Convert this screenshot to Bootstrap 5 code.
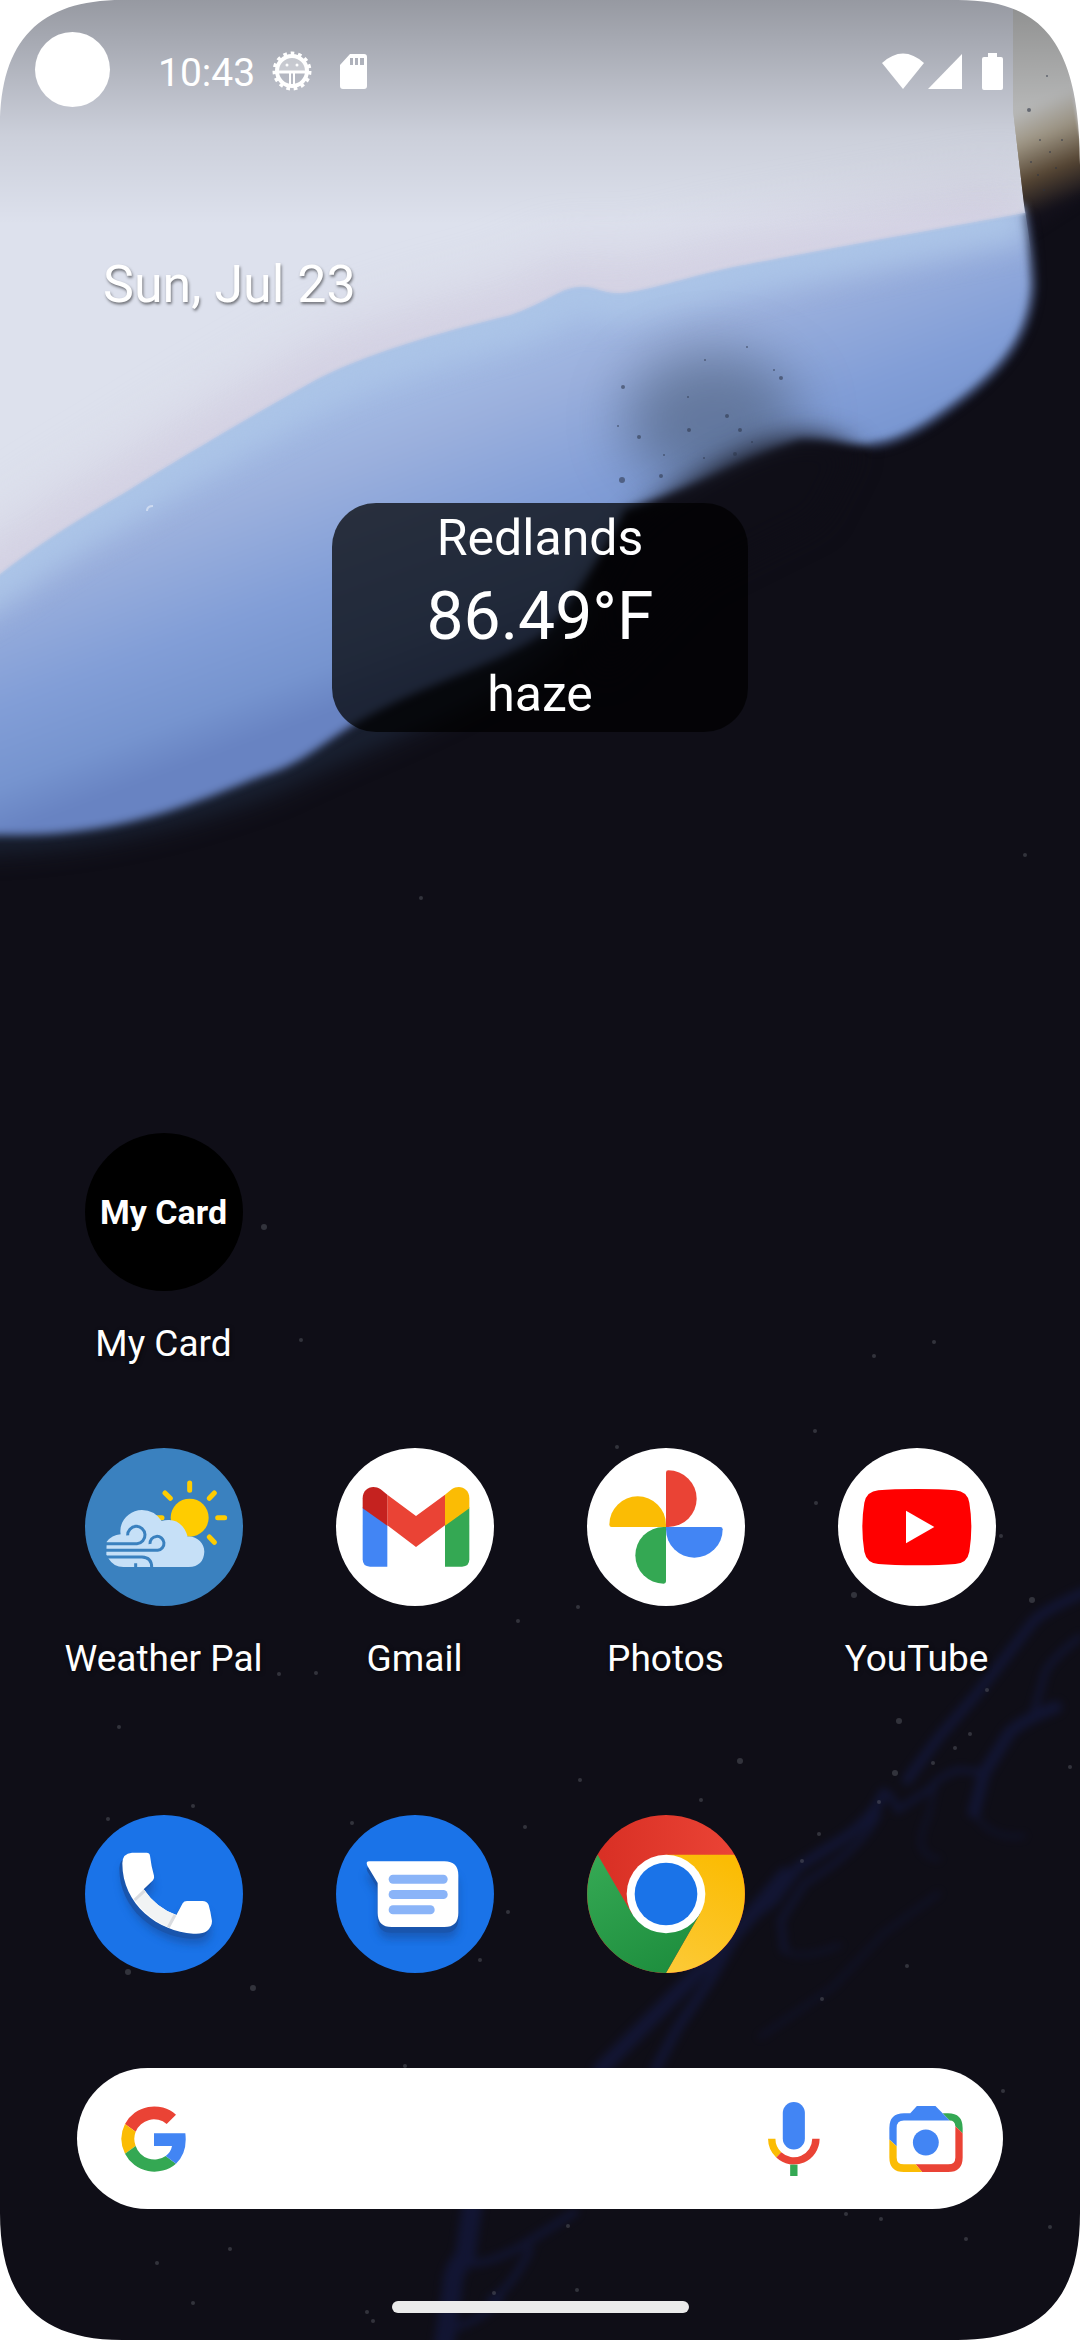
<!DOCTYPE html>
<html lang="en">
<head>
<meta charset="utf-8">
<meta name="viewport" content="width=device-width, initial-scale=1">
<title>Home screen</title>
<link rel="stylesheet" href="https://cdn.jsdelivr.net/npm/bootstrap@5.3.0/dist/css/bootstrap.min.css">
<style>
  body { font-family: Roboto, "Noto Sans", sans-serif; background: #0e0d16; color: #fff; }
  .home { isolation: isolate; }
  .wallpaper, .corners { inset: 0; pointer-events: none; }
  .wallpaper { z-index: -1; }
  .wallpaper filter { color-interpolation-filters: sRGB; }
  .status { height: 142px; padding: 0 77px 0 35px; font-size: 39px; }
  .camera { width: 75px; height: 75px; margin-bottom: 3px; }
  .clock { margin-left: 48px; margin-right: 17px; padding-top: 4px; }
  .sd-card { margin-left: 28px; }
  .battery { margin-left: 20px; }
  .cell-signal { margin-left: 4px; }
  .date { margin: 113px 0 0 103px; font-size: 52px; line-height: 60px; text-shadow: 1px 2px 3px rgba(0,0,0,.5); }
  .weather { margin-top: 188px; width: 416px; padding-bottom: 2px; border-radius: 44px; background: rgba(0,0,0,.72); font-size: 50px; line-height: 71px; }
  .weather .temp { font-size: 66px; line-height: 85px; }
  .apps { padding: 0 38px; row-gap: 82px; }
  .app { gap: 31px; font-size: 37px; line-height: 44px; text-shadow: 1px 1px 4px rgba(0,0,0,.6); }
  .app-icon { width: 158px; height: 158px; flex: none; }
  .dock { margin-top: 134px; }
  .tile-name { font-weight: 700; font-size: 34px; background: #000; text-shadow: none; }
  .search { margin: 95px 77px 0; height: 141px; padding: 0 40px 0 44px; }
  .search input { min-width: 0; font-size: 40px; box-shadow: none; }
  .search .btn { line-height: 0; }
  .lens { margin-left: 69px; }
  .handle { width: 297px; height: 12px; margin: 92px 0 27px; background: #ebebeb; }
</style>
</head>
<body>
<main class="home position-relative d-flex flex-column min-vh-100 overflow-hidden">

  <svg class="wallpaper position-absolute w-100 h-100" viewBox="0 0 1080 2340" preserveAspectRatio="none" aria-hidden="true">
    <defs>
      <linearGradient id="blue" gradientUnits="userSpaceOnUse" x1="168" y1="451" x2="273" y2="733"><stop stop-color="#a6bee6"/><stop offset=".25" stop-color="#9bb0dd"/><stop offset=".6" stop-color="#829ed7"/><stop offset=".85" stop-color="#7694cf"/><stop offset="1" stop-color="#6883c2"/></linearGradient>
      <linearGradient id="ember" gradientUnits="userSpaceOnUse" x1="1022" y1="110" x2="1060" y2="205"><stop stop-color="#d0d1d1"/><stop offset=".3" stop-color="#aaa18f"/><stop offset=".65" stop-color="#5a4936"/><stop offset="1" stop-color="#12101a"/></linearGradient>
      <linearGradient id="scrim" x2="0" y2="1"><stop stop-color="#000" stop-opacity=".32"/><stop offset=".3" stop-color="#000" stop-opacity=".2"/><stop offset=".6" stop-color="#000" stop-opacity=".08"/><stop offset="1" stop-color="#000" stop-opacity="0"/></linearGradient>
      <filter id="b1" filterUnits="userSpaceOnUse" x="-100" y="-100" width="1280" height="2540"><feGaussianBlur stdDeviation="1"/></filter>
      <filter id="b3" filterUnits="userSpaceOnUse" x="-100" y="-100" width="1280" height="2540"><feGaussianBlur stdDeviation="4"/></filter>
      <filter id="b12" filterUnits="userSpaceOnUse" x="-100" y="-100" width="1280" height="2540"><feGaussianBlur stdDeviation="14"/></filter>
      <filter id="b25" filterUnits="userSpaceOnUse" x="-100" y="-100" width="1280" height="2540"><feGaussianBlur stdDeviation="28"/></filter>
      <path id="ridge" d="M-80 624L0 574Q50 535 124 493C160 470 240 422 310 383C360 355 440 332 510 315C545 303 560 288 578 287C595 285 600 293 619 293C640 293 690 276 733 267C800 254 950 226 1025 213"/>
      <path id="sky" d="M-80 -80H1013V110L1025 213C950 226 800 254 733 267C690 276 640 293 619 293C600 293 595 285 578 287C560 288 545 303 510 315C440 332 360 355 310 383C240 422 160 470 124 493Q50 535 0 574L-80 624Z"/>
      <path id="wave" d="M-80 560L300 330L600 240L1024 205Q1032 250 1033 285C1030 350 985 385 929 423Q895 444 871 445C850 445 825 440 800 440C740 460 690 490 625 510C610 545 575 600 545 632C500 665 420 685 358 722C320 745 300 765 262 776C200 800 130 834 20 835H-80Z"/>
      <clipPath id="skyClip"><use href="#sky"/></clipPath>
      <clipPath id="waveClip"><use href="#wave"/></clipPath>
    </defs>
    <rect width="1080" height="2340" fill="#0f0e17"/>
    <path d="M-80 838C70 842 180 812 270 778C400 715 520 680 590 590" fill="none" stroke="#1f2b40" stroke-width="22" filter="url(#b12)"/>
    <path d="M960-80H1160V150L1020 240L960 200Z" fill="url(#ember)" filter="url(#b3)"/>
    <path d="M1066 40Q1072 110 1085 160V40Z" fill="#d5d5da" opacity=".6" filter="url(#b1)"/>
    <use href="#wave" fill="url(#blue)" filter="url(#b3)"/>
    <g clip-path="url(#waveClip)"><use href="#ridge" fill="none" stroke="#abc4e7" stroke-width="56" filter="url(#b12)"/></g>
    <ellipse cx="712" cy="420" rx="88" ry="70" fill="#46566f" opacity=".55" filter="url(#b25)"/>
    <path d="M590 600L625 535L650 510Q700 475 740 455Q790 432 825 438L856 450L820 520L700 580L600 680Z" fill="#0f0e17" filter="url(#b12)"/>
    <g clip-path="url(#skyClip)">
      <use href="#sky" fill="#dde1ed"/>
      <use href="#ridge" fill="none" stroke="#d3d0e2" stroke-width="60" filter="url(#b25)"/>
      <use href="#ridge" fill="none" stroke="#d2cfe2" stroke-width="12" filter="url(#b12)"/>
    </g>
    <use href="#ridge" fill="none" stroke="#bfcae4" stroke-width="2" filter="url(#b1)"/>
    <path d="M1027 215Q1033 250 1034 285C1031 350 986 385 930 423Q895 445 871 446" fill="none" stroke="#26304f" stroke-opacity=".4" stroke-width="8" filter="url(#b3)"/>
    <path d="M147 511q0-5 6-5" fill="none" stroke="#cddaf0" stroke-width="2"/>
    <g fill="#2b3448" opacity=".55">
      <circle cx="747" cy="347" r="1"/><circle cx="781" cy="378" r="2"/><circle cx="689" cy="430" r="2"/><circle cx="623" cy="387" r="2"/><circle cx="688" cy="397" r="1"/><circle cx="727" cy="416" r="2"/><circle cx="618" cy="426" r="1"/><circle cx="639" cy="437" r="2"/><circle cx="661" cy="476" r="2"/><circle cx="622" cy="480" r="3"/><circle cx="740" cy="430" r="2"/><circle cx="752" cy="442" r="1"/><circle cx="704" cy="458" r="1"/><circle cx="735" cy="454" r="2"/><circle cx="774" cy="370" r="1"/><circle cx="705" cy="360" r="1"/><circle cx="664" cy="455" r="1"/><circle cx="1029" cy="110" r="2"/><circle cx="1047" cy="76" r="1"/><circle cx="1040" cy="140" r="1"/><circle cx="1031" cy="162" r="1"/><circle cx="1050" cy="152" r="1"/><circle cx="1056" cy="168" r="1"/><circle cx="1038" cy="175" r="1"/><circle cx="1062" cy="140" r="1"/><circle cx="1044" cy="190" r="1"/>
    </g>
    <g fill="none" stroke="#17205a" stroke-linecap="round" opacity=".42" filter="url(#b3)">
      <path d="M1085 1592Q1040 1612 1032 1623L1001 1663L974 1697L939 1737L907 1780M884 1793Q870 1823 836 1843L798 1867L774 1900L743 1923L712 1977L678 2027L655 2070" stroke-width="10"/>
      <path d="M785 1875Q740 1930 700 1970Q640 2030 600 2070" stroke-width="15"/>
      <path d="M1056 1707Q1010 1725 1005 1740L984 1773L974 1812" stroke-width="12"/>
      <path d="M1080 1637Q1043 1665 1043 1680L1034 1710M984 1772L957 1770Q933 1780 933 1787L898 1810L890 1795M878 1815Q860 1850 805 1883L781 1920L784 1950" stroke-width="6"/>
      <path d="M784 1950Q800 1962 840 1945M935 1785l-6 30q-20 40 10 44M974 1812q15 28 50 24M939 1893L884 1933L833 1987L760 2037" stroke-width="3"/>
      <path d="M473 2200L465 2257Q452 2270 452 2290L444 2345" stroke-width="20"/>
      <path d="M465 2262Q480 2268 520 2247L575 2212M530 2250Q510 2290 490 2300M455 2328Q480 2320 500 2300" stroke-width="7"/>
    </g>
    <g fill="#6d7078" opacity=".38">
      <circle cx="264" cy="1227" r="3"/><circle cx="301" cy="1340" r="2"/><circle cx="421" cy="898" r="2"/><circle cx="1025" cy="855" r="2"/><circle cx="874" cy="1356" r="2"/><circle cx="934" cy="1342" r="2"/><circle cx="854" cy="1595" r="3"/><circle cx="1032" cy="1600" r="3"/><circle cx="1001" cy="1536" r="2"/><circle cx="816" cy="1503" r="2"/><circle cx="815" cy="1431" r="2"/><circle cx="617" cy="1447" r="2"/><circle cx="578" cy="1607" r="2"/><circle cx="740" cy="1761" r="3"/><circle cx="701" cy="1800" r="2"/><circle cx="580" cy="1780" r="2"/><circle cx="899" cy="1721" r="3"/><circle cx="987" cy="1690" r="2"/><circle cx="970" cy="1734" r="2"/><circle cx="955" cy="1748" r="2"/><circle cx="933" cy="1763" r="2"/><circle cx="895" cy="1773" r="3"/><circle cx="879" cy="1802" r="2"/><circle cx="1070" cy="1767" r="2"/><circle cx="819" cy="1834" r="2"/><circle cx="802" cy="1861" r="2"/><circle cx="907" cy="1966" r="2"/><circle cx="822" cy="1999" r="2"/><circle cx="518" cy="1621" r="2"/><circle cx="316" cy="1673" r="2"/><circle cx="279" cy="1674" r="2"/><circle cx="119" cy="1727" r="2"/><circle cx="128" cy="1972" r="3"/><circle cx="253" cy="1988" r="3"/><circle cx="108" cy="1819" r="2"/><circle cx="193" cy="1806" r="2"/><circle cx="352" cy="1823" r="2"/><circle cx="525" cy="1827" r="2"/><circle cx="508" cy="1912" r="2"/><circle cx="480" cy="1960" r="2"/><circle cx="405" cy="2066" r="2"/><circle cx="230" cy="2249" r="2"/><circle cx="157" cy="2263" r="2"/><circle cx="193" cy="2303" r="2"/><circle cx="373" cy="2321" r="2"/><circle cx="367" cy="2312" r="2"/><circle cx="494" cy="2293" r="2"/><circle cx="568" cy="2226" r="2"/><circle cx="577" cy="2290" r="2"/><circle cx="1003" cy="2091" r="2"/><circle cx="1050" cy="2227" r="2"/><circle cx="966" cy="2239" r="2"/><circle cx="881" cy="2219" r="2"/><circle cx="846" cy="2214" r="2"/>
    </g>
    <rect width="1080" height="225" fill="url(#scrim)"/>
  </svg>

  <header class="status d-flex align-items-center">
    <span class="camera rounded-circle bg-white"></span>
    <time class="clock">10:43</time>
    <svg width="40" height="40" viewBox="0 0 40 40" fill="none" stroke="#fff" aria-hidden="true">
      <path d="M6 20A14 14 0 0 1 34 20Z" fill="#fff" fill-opacity=".3" stroke="none"/>
      <circle cx="20" cy="20" r="15" stroke-width="4"/><circle cx="20" cy="20" r="17.500" stroke-width="4" stroke-dasharray="3.600 3.730"/>
      <path d="M6 21H34" stroke-width="3"/><path d="M18 21V35M22 21V35" stroke-width="2"/>
      <g fill="#fff" stroke="none"><circle cx="15" cy="14" r="1.500"/><circle cx="25" cy="14" r="1.500"/></g>
    </svg>
    <svg class="sd-card" width="27" height="35" viewBox="0 0 27 35" fill="#fff" aria-hidden="true"><path fill-rule="evenodd" d="M10 0H24Q27 0 27 3V32Q27 35 24 35H3Q0 35 0 32V11ZM10 4V11H13V4ZM15 4V11H18V4ZM20 4V11H24V4Z"/></svg>
    <svg class="ms-auto" width="42" height="36" viewBox="0 0 42 36" fill="#fff" aria-hidden="true"><path d="M0 10Q21-9 42 10L21 36Z"/></svg>
    <svg class="cell-signal" width="34" height="35" viewBox="0 0 34 35" fill="#fff" aria-hidden="true"><path d="M0 35L34 0V35Z"/></svg>
    <svg class="battery" width="21" height="37" viewBox="0 0 21 37" fill="#fff" aria-hidden="true"><path d="M6 0H15V4H19Q21 4 21 6V35Q21 37 19 37H2Q0 37 0 35V6Q0 4 2 4H6Z"/></svg>
  </header>

  <div class="date">Sun, Jul 23</div>

  <section class="weather align-self-center text-center" aria-label="Weather">
    <div>Redlands</div>
    <div class="temp">86.49°F</div>
    <div>haze</div>
  </section>

  <nav class="apps row g-0 mt-auto" aria-label="Apps">
    <div class="col-12">
      <div class="row g-0"><div class="col-3">
        <a href="#" class="app d-flex flex-column align-items-center text-white text-decoration-none">
          <span class="app-icon tile-name rounded-circle d-flex align-items-center justify-content-center text-nowrap" aria-hidden="true">My Card</span>
          <span>My Card</span>
        </a>
      </div></div>
    </div>
    <div class="col-3">
      <a href="#" class="app d-flex flex-column align-items-center text-white text-decoration-none">
        <svg class="app-icon" viewBox="0 0 474 474" aria-hidden="true">
          <circle cx="237" cy="237" r="237" fill="#3a81bf"/>
          <circle cx="314" cy="209" r="57" fill="#fc0"/>
          <path d="M314 105V127M388 135L373 151M240 135L256 151M398 209H419M215 209H231M373 267L388 283" stroke="#fc0" stroke-width="15" stroke-linecap="round"/>
          <path d="M65 281Q80 262 107 259C100 222 132 186 171 186Q208 186 230 219Q243 215 253 216C280 216 301 238 308 266C336 264 358 286 358 311Q356 355 311 357H115Q86 357 71 332L64 320Z" fill="#c6e0f7"/>
          <path d="M62 287H156A26 26 0 1 0 128 262M62 307H218A21 21 0 1 0 195 288M62 327H171Q200 328 200 358M152 346V358" fill="none" stroke="#3a81bf" stroke-width="9"/>
        </svg>
        <span class="text-nowrap">Weather Pal</span>
      </a>
    </div>
    <div class="col-3">
      <a href="#" class="app d-flex flex-column align-items-center text-white text-decoration-none">
        <svg class="app-icon" viewBox="0 0 474 474" aria-hidden="true">
          <circle cx="237" cy="237" r="237" fill="#fff"/>
          <path d="M80 178L154 231V356H102Q80 356 80 334Z" fill="#4285f4"/>
          <path d="M400 178L327 231V356H378Q400 356 400 334Z" fill="#34a853"/>
          <path d="M154 140L240 204L327 140V232L240 297L154 232Z" fill="#ea4335"/>
          <path d="M80 181V151C80 120 111 108 134 124L154 140V233Z" fill="#c5221f"/>
          <path d="M400 181V151C400 120 369 108 347 124L327 140V233Z" fill="#fbbc04"/>
        </svg>
        <span>Gmail</span>
      </a>
    </div>
    <div class="col-3">
      <a href="#" class="app d-flex flex-column align-items-center text-white text-decoration-none">
        <svg class="app-icon" viewBox="0 0 474 474" aria-hidden="true">
          <defs><path id="petal" d="M237 237V74Q237 67 244 67A85 85 0 0 1 244 237Z"/></defs>
          <circle cx="237" cy="237" r="237" fill="#fff"/>
          <use href="#petal" fill="#ea4335"/><use href="#petal" fill="#4285f4" transform="rotate(90 237 237)"/><use href="#petal" fill="#34a853" transform="rotate(180 237 237)"/><use href="#petal" fill="#fbbc04" transform="rotate(270 237 237)"/>
        </svg>
        <span>Photos</span>
      </a>
    </div>
    <div class="col-3">
      <a href="#" class="app d-flex flex-column align-items-center text-white text-decoration-none">
        <svg class="app-icon" viewBox="0 0 474 474" aria-hidden="true">
          <circle cx="237" cy="237" r="237" fill="#fff"/>
          <path d="M237 123Q310 123 352 127Q388 130 394 164Q400 200 400 237T394 311Q388 345 352 348Q310 352 237 352T121 348Q86 345 79 311Q73 275 73 237T79 164Q86 130 121 127Q163 123 237 123Z" fill="red"/>
          <path d="M204 188L289 237L204 286Z" fill="#fff"/>
        </svg>
        <span>YouTube</span>
      </a>
    </div>
  </nav>

  <nav class="apps dock row g-0" aria-label="Dock">
    <div class="col-3 d-flex justify-content-center">
      <a href="#" class="app d-flex" aria-label="Phone">
        <svg class="app-icon" viewBox="0 0 474 474" aria-hidden="true">
          <defs><filter id="soft"><feGaussianBlur stdDeviation="12"/></filter><path id="handset" d="M141 113H185Q194 113 195 122Q199 155 207 182Q209 190 204 196L176 223Q215 280 274 300L293 265Q297 258 306 258H352Q366 258 371 270Q377 290 381 318Q381 335 366 348Q352 358 325 356C220 350 112 270 112 145Q112 115 141 113Z"/></defs>
          <circle cx="237" cy="237" r="237" fill="#1a73e8"/>
          <use href="#handset" fill="#14458f" opacity=".5" transform="translate(-2 32)" filter="url(#soft)"/>
          <use href="#handset" fill="#1955ad" transform="translate(-9 15)"/>
          <use href="#handset" fill="#fff"/>
          <path d="M176 223Q215 280 274 300L253 339Q190 312 147 254Z" fill="#f1f3f4"/>
          <path d="M179 227L149 255M270 300L250 337" stroke="#dadce0" stroke-width="9"/>
        </svg>
      </a>
    </div>
    <div class="col-3 d-flex justify-content-center">
      <a href="#" class="app d-flex" aria-label="Messages">
        <svg class="app-icon" viewBox="0 0 474 474" aria-hidden="true">
          <defs><path id="bubble" d="M100 139H325Q367 139 367 181V294Q367 336 325 336H167Q125 336 125 294V204L94 152Q88 139 100 139Z"/></defs>
          <circle cx="237" cy="237" r="237" fill="#1a73e8"/>
          <use href="#bubble" fill="#14458f" opacity=".5" transform="translate(0 36)" filter="url(#soft)"/>
          <use href="#bubble" fill="#1955ad" transform="translate(0 17)"/>
          <use href="#bubble" fill="#fff"/>
          <g fill="#8ab4f8"><rect x="158" y="179" width="177" height="27" rx="13"/><rect x="158" y="225" width="177" height="27" rx="13"/><rect x="158" y="271" width="138" height="27" rx="13"/></g>
        </svg>
      </a>
    </div>
    <div class="col-3 d-flex justify-content-center">
      <a href="#" class="app d-flex" aria-label="Chrome">
        <svg class="app-icon" viewBox="0 0 474 474" aria-hidden="true">
          <defs>
            <linearGradient id="cr"><stop offset=".1" stop-color="#d93025"/><stop offset=".9" stop-color="#ea4335"/></linearGradient>
            <linearGradient id="cg" x1=".7" y1="1" x2=".2" y2="0"><stop stop-color="#1e8e3e"/><stop offset="1" stop-color="#34a853"/></linearGradient>
            <linearGradient id="cy" x1=".3" y1="1" x2=".6" y2="0"><stop stop-color="#fcc934"/><stop offset="1" stop-color="#fbbc04"/></linearGradient>
          </defs>
          <circle cx="237" cy="237" r="237" fill="url(#cr)"/>
          <path d="M237 119H442A237 237 0 0 1 237 474L339 296Z" fill="url(#cy)"/>
          <path d="M339 296L237 474A237 237 0 0 1 32 119L135 296Z" fill="url(#cg)"/>
          <circle cx="237" cy="237" r="118" fill="#fff"/><circle cx="237" cy="237" r="94" fill="#1a73e8"/>
        </svg>
      </a>
    </div>
  </nav>

  <form class="search d-flex align-items-center bg-white rounded-pill" role="search">
    <svg class="flex-shrink-0" width="66" height="66" viewBox="0 0 198 198" aria-hidden="true">
      <path d="M12 54A99 99 0 0 1 165 26L137 54A59 59 0 0 0 44 77Z" fill="#ea4335"/>
      <path d="M12 54A99 99 0 0 0 12 143L44 120A59 59 0 0 1 44 77Z" fill="#fbbc04"/>
      <path d="M12 143A99 99 0 0 0 165 173L134 150A59 59 0 0 1 44 120Z" fill="#34a853"/>
      <path d="M99 82H193Q200 140 165 173L134 150Q150 138 153 120H99Z" fill="#4285f4"/>
    </svg>
    <input type="text" class="form-control border-0 bg-transparent flex-grow-1" aria-label="Search">
    <button type="button" class="btn p-0 border-0" aria-label="Voice search">
      <svg width="52" height="74" viewBox="0 0 155 221" aria-hidden="true">
        <rect x="44" width="66" height="142" rx="33" fill="#4285f4"/>
        <path d="M11 110A66 66 0 0 0 32 158" fill="none" stroke="#fbbc04" stroke-width="22"/>
        <path d="M32 158A66 66 0 0 0 143 110" fill="none" stroke="#ea4335" stroke-width="22"/>
        <path d="M66 187H88V221H66Z" fill="#34a853"/>
      </svg>
    </button>
    <button type="button" class="lens btn p-0 border-0" aria-label="Search with camera">
      <svg width="74" height="66" viewBox="0 0 221 199" aria-hidden="true">
        <path d="M63 22L83 0H139L182 44H44Q22 44 22 66V121L0 101V66Q0 22 44 22Z" fill="#4285f4"/>
        <path d="M161 22H177Q221 22 221 66V82L199 61Q198 44 182 44Z" fill="#34a853"/>
        <path d="M199 61L221 82V155Q221 199 177 199H99L79 176H177Q199 176 199 155Z" fill="#ea4335"/>
        <path d="M0 101L22 121V155Q22 176 44 176H79L99 199H44Q0 199 0 155Z" fill="#fbbc04"/>
        <circle cx="110" cy="110" r="39" fill="#4285f4"/>
      </svg>
    </button>
  </form>

  <div class="handle rounded-pill align-self-center"></div>

  <svg class="corners position-absolute w-100 h-100" viewBox="0 0 1080 2340" preserveAspectRatio="none" fill="#fff" aria-hidden="true">
    <path d="M0 0H122C40 0 0 40 0 127Z"/><path d="M1080 0H958C1040 0 1080 40 1080 165Z"/>
    <path d="M0 2340H122C40 2340 0 2300 0 2213Z"/><path d="M1080 2340H958C1040 2340 1080 2300 1080 2213Z"/>
  </svg>
</main>
<script src="https://cdn.jsdelivr.net/npm/bootstrap@5.3.0/dist/js/bootstrap.bundle.min.js"></script>
</body>
</html>
